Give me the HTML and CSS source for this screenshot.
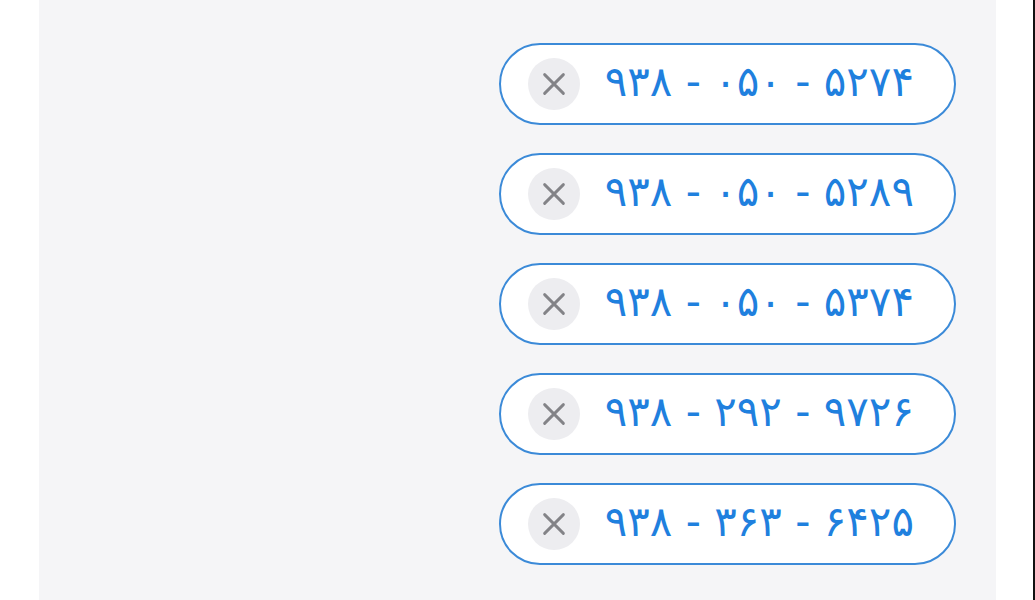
FILE: index.html
```html
<!DOCTYPE html>
<html lang="fa">
<head>
<meta charset="utf-8">
<link rel="stylesheet" href="styles.css">
</head>
<body>
<div class="page">
  <div class="panel">
    <div class="chip-list">
      <div class="chip">
        <span class="chip-remove"><svg viewBox="0 0 24 24" width="30" height="30"><path d="M4.5 4.5 L19.5 19.5 M19.5 4.5 L4.5 19.5" /></svg></span>
        <span class="chip-text">۹۳۸ - ۰۵۰ - ۵۲۷۴</span>
      </div>
      <div class="chip">
        <span class="chip-remove"><svg viewBox="0 0 24 24" width="30" height="30"><path d="M4.5 4.5 L19.5 19.5 M19.5 4.5 L4.5 19.5" /></svg></span>
        <span class="chip-text">۹۳۸ - ۰۵۰ - ۵۲۸۹</span>
      </div>
      <div class="chip">
        <span class="chip-remove"><svg viewBox="0 0 24 24" width="30" height="30"><path d="M4.5 4.5 L19.5 19.5 M19.5 4.5 L4.5 19.5" /></svg></span>
        <span class="chip-text">۹۳۸ - ۰۵۰ - ۵۳۷۴</span>
      </div>
      <div class="chip">
        <span class="chip-remove"><svg viewBox="0 0 24 24" width="30" height="30"><path d="M4.5 4.5 L19.5 19.5 M19.5 4.5 L4.5 19.5" /></svg></span>
        <span class="chip-text">۹۳۸ - ۲۹۲ - ۹۷۲۶</span>
      </div>
      <div class="chip">
        <span class="chip-remove"><svg viewBox="0 0 24 24" width="30" height="30"><path d="M4.5 4.5 L19.5 19.5 M19.5 4.5 L4.5 19.5" /></svg></span>
        <span class="chip-text">۹۳۸ - ۳۶۳ - ۶۴۲۵</span>
      </div>
    </div>
  </div>
</div>
</body>
</html>
```
FILE: styles.css
```css
html, body {
  margin: 0;
  padding: 0;
  background: #ffffff;
}
body {
  font-family: "DejaVu Sans", "Noto Sans", sans-serif;
}
.page {
  display: flex;
  height: 600px;
  overflow: hidden;
  border-right: 2px solid #111111;
  box-sizing: border-box;
}
.panel {
  margin-left: 39px;
  width: 957px;
  background: #f5f5f7;
  padding: 43px 40px 0 0;
  box-sizing: border-box;
}
.chip-list {
  display: flex;
  flex-direction: column;
  align-items: flex-end;
  gap: 28px;
}
.chip {
  display: flex;
  align-items: center;
  height: 82px;
  box-sizing: border-box;
  border: 2px solid #3b8ad8;
  border-radius: 41px;
  background: #ffffff;
  padding: 0 40px 0 27px;
  direction: ltr;
}
.chip-remove {
  width: 52px;
  height: 52px;
  border-radius: 50%;
  background: #ededf0;
  display: flex;
  align-items: center;
  justify-content: center;
  margin-right: 25px;
}
.chip-remove svg path {
  stroke: #838387;
  stroke-width: 2.3;
  stroke-linecap: round;
  fill: none;
}
.chip-text {
  font-size: 42px;
  line-height: 1;
  color: #1f80de;
  white-space: pre;
  unicode-bidi: isolate;
  direction: ltr;
  padding-bottom: 4px;
}
```
